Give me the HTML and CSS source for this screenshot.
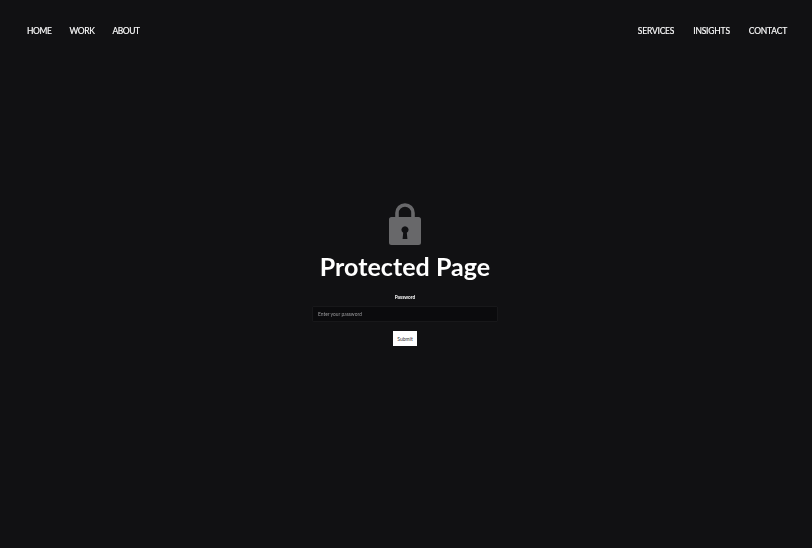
FILE: index.html
```html
<!DOCTYPE html>
<html lang="en">
<head>
<meta charset="utf-8">
<title>Protected Page</title>
<link rel="stylesheet" href="styles.css">
</head>
<body>
<header class="site-header">
  <nav class="nav nav-left">
    <a href="#">HOME</a>
    <a href="#">WORK</a>
    <a href="#">ABOUT</a>
  </nav>
  <nav class="nav">
    <a href="#">SERVICES</a>
    <a href="#">INSIGHTS</a>
    <a href="#">CONTACT</a>
  </nav>
</header>
<main class="gate">
  <svg class="lock" viewBox="0 0 32 42" width="32" height="42" aria-hidden="true">
    <path class="shackle" d="M8 16V10a8 8 0 0 1 16 0V16" />
    <path class="lock-body" fill-rule="evenodd" d="M2.500 14h27a2.500 2.500 0 0 1 2.500 2.500v23a2.500 2.500 0 0 1-2.500 2.500h-27A2.500 2.500 0 0 1 0 39.500v-23A2.500 2.500 0 0 1 2.500 14ZM16 23.200a3.500 3.500 0 0 0-1.800 6.500L13.600 36h4.800L17.800 29.700a3.500 3.500 0 0 0-1.800-6.500Z" />
  </svg>
  <h1 class="title">Protected Page</h1>
  <form class="form">
    <label class="label" for="pw">Password</label>
    <input class="input" id="pw" type="password" placeholder="Enter your password">
    <button class="submit" type="button">Submit</button>
  </form>
</main>
</body>
</html>
```
FILE: styles.css
```css
* { box-sizing: border-box; }
html, body { height: 100%; }
body {
  margin: 0;
  background: #111113;
  color: #fff;
  font-family: Lato, "Liberation Sans", sans-serif;
  overflow: hidden;
}
.site-header {
  display: flex;
  justify-content: space-between;
  padding: 25px 25px 0 27px;
  height: 203px;
  will-change: opacity;
}
.nav { display: flex; gap: 19px; }
.nav a {
  color: #fff;
  text-decoration: none;
  font-size: 8.5px;
  line-height: 13px;
  font-weight: 400;
  letter-spacing: -0.2px;
  -webkit-text-stroke: 0.15px #fff;
}
.nav-left { gap: 18px; }
.nav-left a { letter-spacing: -0.4px; }
.gate {
  display: flex;
  flex-direction: column;
  align-items: center;
  padding-right: 2px;
  will-change: opacity;
}
.lock { display: block; }
.shackle { fill: none; stroke: #68686a; stroke-width: 3.6; }
.lock-body { fill: #68686a; }
.title {
  margin: 5px 0 0;
  font-size: 25px;
  line-height: 32px;
  font-weight: 700;
  letter-spacing: 0.05px;
}
.form {
  display: flex;
  flex-direction: column;
  align-items: center;
  margin-top: 12px;
}
.label {
  font-size: 4.8px;
  line-height: 6px;
  font-weight: 700;
}
.input {
  width: 186px;
  height: 16px;
  margin-top: 6px;
  padding: 0 5px;
  background: #0b0b0d;
  border: 1px solid #18181a;
  border-radius: 1px;
  color: #fff;
  font-family: inherit;
  font-size: 4.9px;
  outline: none;
}
.input::placeholder { color: #9a9a9c; opacity: 1; }
.submit {
  width: 24px;
  height: 15px;
  margin-top: 9px;
  padding: 0;
  background: #fff;
  color: #333;
  border: none;
  border-radius: 0;
  font-family: inherit;
  font-size: 5px;
}
```
